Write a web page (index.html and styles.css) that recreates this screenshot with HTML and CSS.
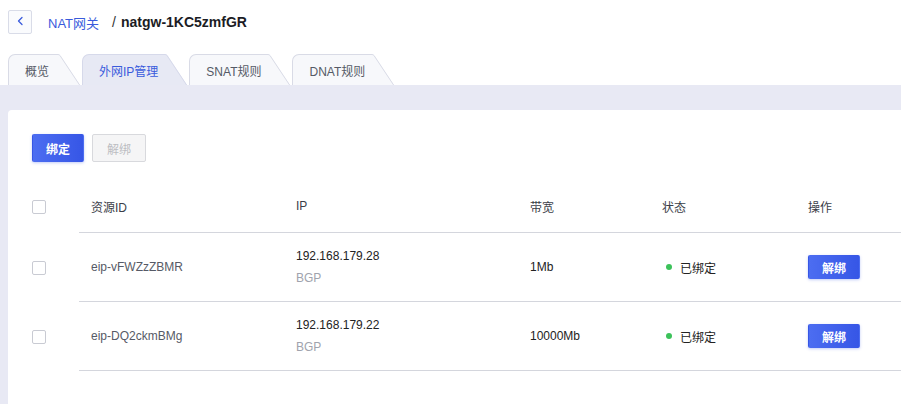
FILE: index.html
```html
<!DOCTYPE html>
<html lang="zh-CN">
<head>
<meta charset="utf-8">
<title>natgw-1KC5zmfGR</title>
<link rel="stylesheet" href="styles.css">
</head>
<body>
<div class="header">
  <button class="back" type="button" aria-label="返回">
    <svg width="22" height="22" viewBox="0 0 22 22"><path d="M13 6.5 L9.5 10 L13 13.5" fill="none" stroke="#3a5bdc" stroke-width="1.3" stroke-linecap="round" stroke-linejoin="round"/></svg>
  </button>
  <a class="crumb">NAT网关</a>
  <span class="sep">/</span>
  <span class="title">natgw-1KC5zmfGR</span>
</div>

<div class="tabs">
  <div class="tab"><span class="tab-body">概览</span><svg class="slant" width="23" height="31" viewBox="0 0 23 31"><path class="fill" d="M0 0 H1 Q2.5 0 3.5 1.3 L23 31 H0 Z"/><path class="edge" d="M0 0.5 H1 Q2.2 0.5 3.2 1.8 L22.6 31"/></svg></div>
  <div class="tab active"><span class="tab-body">外网IP管理</span><svg class="slant" width="23" height="31" viewBox="0 0 23 31"><path class="fill" d="M0 0 H1 Q2.5 0 3.5 1.3 L23 31 H0 Z"/><path class="edge" d="M0 0.5 H1 Q2.2 0.5 3.2 1.8 L22.6 31"/></svg></div>
  <div class="tab"><span class="tab-body">SNAT规则</span><svg class="slant" width="23" height="31" viewBox="0 0 23 31"><path class="fill" d="M0 0 H1 Q2.5 0 3.5 1.3 L23 31 H0 Z"/><path class="edge" d="M0 0.5 H1 Q2.2 0.5 3.2 1.8 L22.6 31"/></svg></div>
  <div class="tab"><span class="tab-body">DNAT规则</span><svg class="slant" width="23" height="31" viewBox="0 0 23 31"><path class="fill" d="M0 0 H1 Q2.5 0 3.5 1.3 L23 31 H0 Z"/><path class="edge" d="M0 0.5 H1 Q2.2 0.5 3.2 1.8 L22.6 31"/></svg></div>
</div>

<div class="main">
  <div class="card">
    <div class="toolbar">
      <button class="btn primary" type="button">绑定</button>
      <button class="btn disabled" type="button">解绑</button>
    </div>

    <div class="table">
      <div class="row head">
        <div class="cb-cell"><span class="checkbox"></span></div>
        <div class="cell">资源ID</div>
        <div class="cell">IP</div>
        <div class="cell">带宽</div>
        <div class="cell">状态</div>
        <div class="cell">操作</div>
      </div>
      <div class="row">
        <div class="cb-cell"><span class="checkbox"></span></div>
        <div class="cell id">eip-vFWZzZBMR</div>
        <div class="cell ip"><div>192.168.179.28</div><div class="sub">BGP</div></div>
        <div class="cell">1Mb</div>
        <div class="cell"><span class="dot"></span>已绑定</div>
        <div class="cell"><button class="btn small primary" type="button">解绑</button></div>
      </div>
      <div class="row">
        <div class="cb-cell"><span class="checkbox"></span></div>
        <div class="cell id">eip-DQ2ckmBMg</div>
        <div class="cell ip"><div>192.168.179.22</div><div class="sub">BGP</div></div>
        <div class="cell">10000Mb</div>
        <div class="cell"><span class="dot"></span>已绑定</div>
        <div class="cell"><button class="btn small primary" type="button">解绑</button></div>
      </div>
    </div>
  </div>
</div>
</body>
</html>
```
FILE: styles.css
```css
* { box-sizing: border-box; }

html, body {
  margin: 0;
  height: 100%;
}

body {
  font-family: "Liberation Sans", "Noto Sans CJK SC", sans-serif;
  font-size: 12px;
  color: #222;
  background: #fff;
  display: flex;
  flex-direction: column;
  overflow: hidden;
}

.header {
  height: 44px;
  display: flex;
  align-items: center;
  padding-left: 8px;
}

.back {
  width: 24px;
  height: 24px;
  padding: 0;
  margin: 0;
  border: 1px solid #d9dce8;
  border-radius: 2px;
  background: #fafbfd;
  display: flex;
  align-items: center;
  justify-content: center;
}

.crumb {
  margin-left: 16px;
  font-size: 13px;
  color: #3a5bdc;
}

.sep {
  margin-left: 13px;
  font-size: 14px;
  color: #333;
}

.title {
  margin-left: 5px;
  font-size: 14px;
  font-weight: bold;
  color: #1b1c24;
}

.tabs {
  display: flex;
  margin-top: 10px;
  padding-left: 8px;
  height: 31px;
}

.tab {
  display: flex;
  margin-right: 2px;
  --tab-bg: #f7f8fb;
  --tab-border: #d9dbe6;
}

.tab.active {
  --tab-bg: #e7e9f4;
  --tab-border: #d6d9ea;
}

.tab-body {
  height: 31px;
  padding: 0 6px 0 16px;
  display: flex;
  align-items: center;
  background: var(--tab-bg);
  border-top: 1px solid var(--tab-border);
  border-left: 1px solid var(--tab-border);
  border-top-left-radius: 7px;
  color: #555a66;
  white-space: nowrap;
}

.tab:first-child .tab-body {
  padding-right: 8px;
}

.tab.active .tab-body {
  color: #3a5bdc;
}

.slant { display: block; }
.slant .fill { fill: var(--tab-bg); }
.slant .edge { fill: none; stroke: var(--tab-border); stroke-width: 1; }

.main {
  flex: 1;
  background: #e8e9f4;
  padding: 25px 0 0 8px;
  display: flex;
}

.card {
  flex: 1;
  background: #fff;
  border-top-left-radius: 4px;
  padding: 24px 0 0 24px;
}

.toolbar {
  display: flex;
  gap: 8px;
  margin-bottom: 18px;
}

.btn {
  font-family: inherit;
  font-size: 12px;
  height: 28px;
  width: 52px;
  padding: 0;
  border-radius: 2px;
  border: 1px solid transparent;
}

.btn.primary {
  background: linear-gradient(90deg, #4c6df1, #3656e6);
  color: #fff;
  font-weight: bold;
  box-shadow: 0 1px 3px rgba(54, 86, 230, 0.3);
}

.btn.disabled {
  width: 54px;
  background: #f5f5f6;
  border-color: #d8d9dd;
  color: #bcbdc2;
}

.btn.small {
  height: 24px;
}

.row {
  display: grid;
  grid-template-columns: 47px 205px 234px 132px 146px 1fr;
  height: 69px;
}

.row.head {
  height: 53px;
  color: #3b3e48;
}

.cb-cell {
  display: flex;
  align-items: center;
}

.checkbox {
  width: 14px;
  height: 14px;
  border: 1px solid #c9cbd3;
  border-radius: 2px;
  background: #fff;
}

.cell {
  display: flex;
  align-items: center;
  padding-left: 12px;
  border-bottom: 1px solid #d4d6dd;
  white-space: nowrap;
}

.cell.id { color: #565a66; }

.cell.ip {
  flex-direction: column;
  align-items: flex-start;
  justify-content: center;
  line-height: 22px;
}

.sub { color: #a0a3ad; }

.dot {
  width: 6px;
  height: 6px;
  border-radius: 50%;
  background: #3cc25a;
  margin: 0 8px 0 4px;
}
```
